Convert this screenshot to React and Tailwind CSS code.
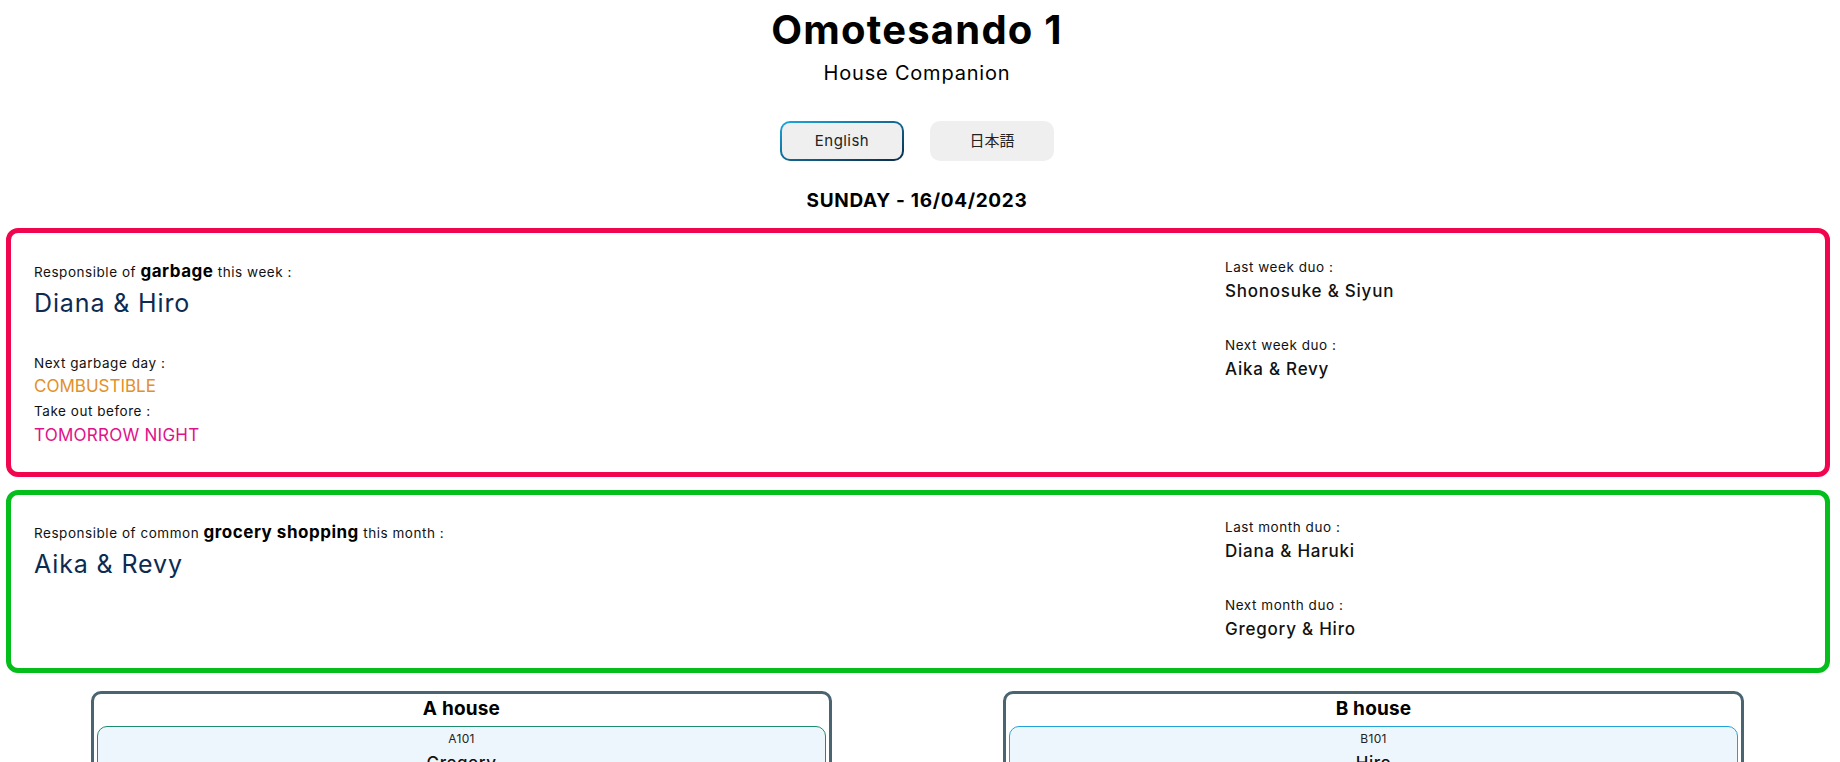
import React from "react";

function DuoBlock({ label, name, className = "" }) {
  return (
    <div className={className}>
      <div className="text-[13.5px] leading-[20px] tracking-[0.04em] text-[#111]">{label}</div>
      <div className="mt-[2px] text-[17px] leading-[24px] tracking-[0.045em] font-medium text-[#111]">{name}</div>
    </div>
  );
}

function Room({ code, name }) {
  return (
    <div className="flex flex-col items-center pt-[4px] pb-[8px]">
      <div className="text-[12px] leading-[16px] tracking-[0.03em] text-[#222]">{code}</div>
      <div className="mt-[4px] text-[17px] leading-[24px] tracking-[0.03em] font-medium text-[#111]">{name}</div>
    </div>
  );
}

function HouseCard({ title, rooms, innerBorder }) {
  return (
    <div className="w-[741px] shrink-0 rounded-[10px] border-[3px] border-[#4b6472] px-[3px] pb-[4px]">
      <div className="text-center text-[19px] leading-[29px] font-bold tracking-[0.01em] text-black">{title}</div>
      <div className="flex flex-col gap-[4px] mt-[3px]">
        {rooms.map((r) => (
          <div key={r.code} className={"rounded-[10px] border bg-[#eef6fd] " + innerBorder}>
            <Room code={r.code} name={r.name} />
          </div>
        ))}
      </div>
    </div>
  );
}

export default function App() {
  return (
    <div className="min-h-screen bg-white font-['Inter','Noto_Sans_CJK_JP',sans-serif] text-[#111]">
      <div className="flex flex-col items-center pt-[6px] pr-[6px]">
        <h1 className="text-[40px] leading-[48px] font-bold tracking-[0.03em] text-black">Omotesando 1</h1>
        <p className="mt-[5px] text-[20px] leading-[28px] tracking-[0.04em] text-black">House Companion</p>
        <div className="mt-[34px] flex gap-[26px]">
          <button className="h-[40px] w-[124px] rounded-[10px] bg-linear-to-br from-[#1aa9de] to-[#0a2c4a] p-[2px]">
            <span className="flex h-full w-full items-center justify-center rounded-[8px] bg-[#efefef] text-[15px] tracking-[0.03em] text-[#222]">
              English
            </span>
          </button>
          <button className="flex h-[40px] w-[124px] items-center justify-center rounded-[10px] bg-[#efefef] text-[15px] text-[#222]">
            日本語
          </button>
        </div>
        <p className="mt-[28px] text-[19px] leading-[24px] font-bold tracking-[0.035em] text-black">SUNDAY - 16/04/2023</p>
      </div>

      <div className="mt-[15px] ml-[6px] mr-[10px] flex items-start rounded-[12px] border-[5px] border-[#f1054f] pt-[24px] pb-[25px] pl-[23px]">
        <div className="w-[1191px] pt-[2px]">
          <div className="text-[13.5px] leading-[24px] tracking-[0.04em] text-[#111]">
            Responsible of <span className="text-[17px] font-bold tracking-[0.03em] text-black">garbage</span> this week :
          </div>
          <div className="mt-[3px] text-[25px] leading-[32px] tracking-[0.035em] text-[#0b2b52]">Diana &amp; Hiro</div>
          <div className="mt-[34px] text-[13.5px] leading-[20px] tracking-[0.04em]">Next garbage day :</div>
          <div className="mt-[1px] text-[17px] leading-[24px] text-[#e2902a]">COMBUSTIBLE</div>
          <div className="mt-[3px] text-[13.5px] leading-[20px] tracking-[0.04em]">Take out before :</div>
          <div className="mt-[2px] text-[17px] leading-[24px] tracking-[0.015em] text-[#e0128a]">TOMORROW NIGHT</div>
        </div>
        <div>
          <DuoBlock label="Last week duo :" name="Shonosuke & Siyun" />
          <DuoBlock className="mt-[32px]" label="Next week duo :" name="Aika & Revy" />
        </div>
      </div>

      <div className="mt-[13px] ml-[6px] mr-[10px] flex items-start rounded-[12px] border-[5px] border-[#04be1b] pt-[22px] pb-[27px] pl-[23px]">
        <div className="w-[1191px] pt-[3px]">
          <div className="text-[13.5px] leading-[24px] tracking-[0.04em] text-[#111]">
            Responsible of common <span className="text-[17px] font-bold tracking-[0.03em] text-black">grocery shopping</span> this month :
          </div>
          <div className="mt-[3px] text-[25px] leading-[32px] tracking-[0.035em] text-[#0b2b52]">Aika &amp; Revy</div>
        </div>
        <div>
          <DuoBlock label="Last month duo :" name="Diana & Haruki" />
          <DuoBlock className="mt-[32px]" label="Next month duo :" name="Gregory & Hiro" />
        </div>
      </div>

      <div className="mt-[18px] flex gap-[171px] pl-[91px] pb-[40px]">
        <HouseCard
          title="A house"
          innerBorder="border-[#1e8c6e]"
          rooms={[
            { code: "A101", name: "Gregory" },
            { code: "A102", name: "Diana" },
            { code: "A201", name: "Aika" },
          ]}
        />
        <HouseCard
          title="B house"
          innerBorder="border-[#22a3d8]"
          rooms={[
            { code: "B101", name: "Hiro" },
            { code: "B102", name: "Revy" },
            { code: "B201", name: "Haruki" },
          ]}
        />
      </div>
    </div>
  );
}
